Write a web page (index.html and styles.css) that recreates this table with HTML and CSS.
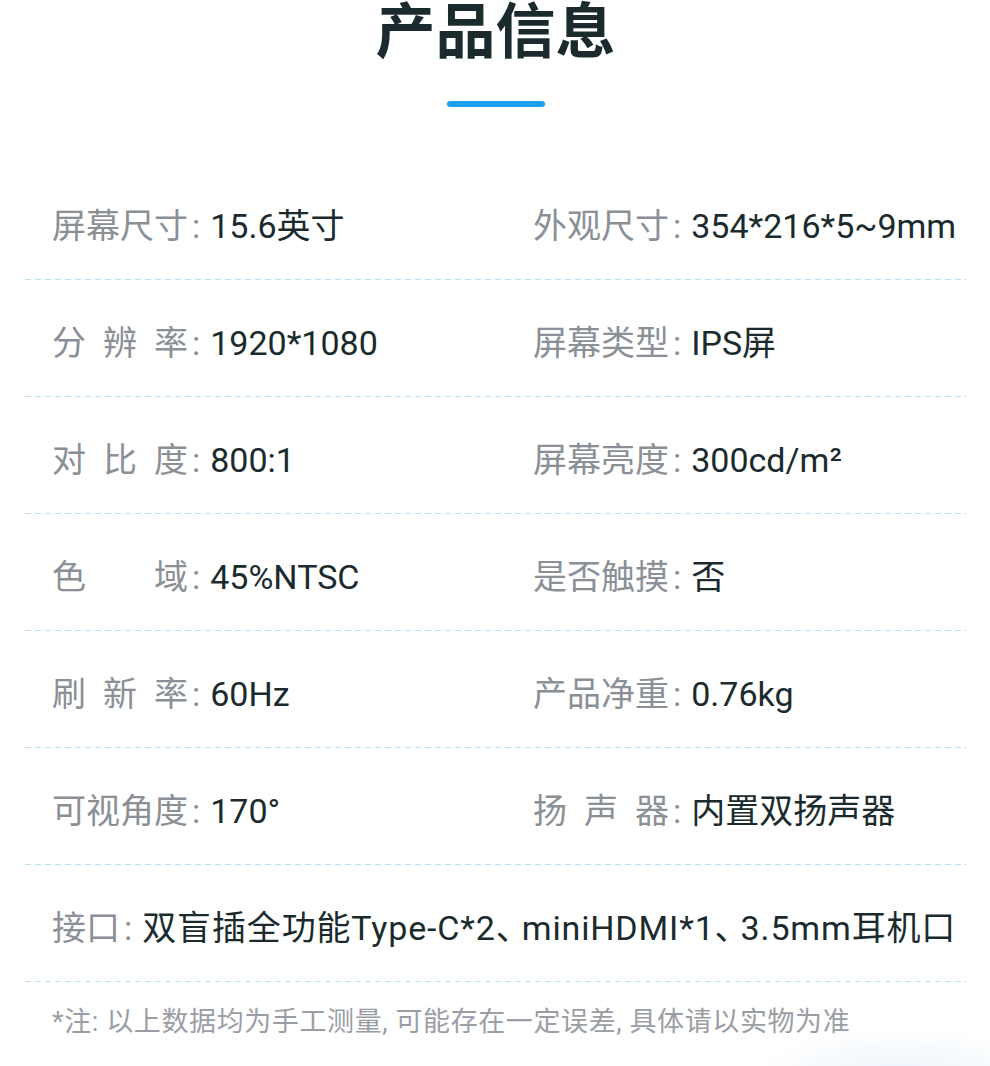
FILE: index.html
```html
<!DOCTYPE html>
<html lang="zh-CN">
<head>
  <meta charset="UTF-8" />
  <meta name="viewport" content="width=device-width, initial-scale=1.0"/>
  <title>产品信息</title>
  <link rel="stylesheet" href="styles.css">
</head>
<body>

<main class="info">
  <header class="info__header">
    <h1 class="info__title">产品信息</h1>
    <div class="info__bar"></div>
  </header>

  <section class="specs">
    <div class="specs__row">
      <div class="specs__item"><span class="specs__label">屏幕尺寸</span><span class="specs__colon">:</span><span class="specs__value">15.6英寸</span></div>
      <div class="specs__item"><span class="specs__label">外观尺寸</span><span class="specs__colon">:</span><span class="specs__value">354*216*5~9mm</span></div>
    </div>
    <div class="specs__row">
      <div class="specs__item"><span class="specs__label">分辨率</span><span class="specs__colon">:</span><span class="specs__value">1920*1080</span></div>
      <div class="specs__item"><span class="specs__label">屏幕类型</span><span class="specs__colon">:</span><span class="specs__value">IPS屏</span></div>
    </div>
    <div class="specs__row">
      <div class="specs__item"><span class="specs__label">对比度</span><span class="specs__colon">:</span><span class="specs__value">800:1</span></div>
      <div class="specs__item"><span class="specs__label">屏幕亮度</span><span class="specs__colon">:</span><span class="specs__value">300cd/m²</span></div>
    </div>
    <div class="specs__row">
      <div class="specs__item"><span class="specs__label">色域</span><span class="specs__colon">:</span><span class="specs__value">45%NTSC</span></div>
      <div class="specs__item"><span class="specs__label">是否触摸</span><span class="specs__colon">:</span><span class="specs__value">否</span></div>
    </div>
    <div class="specs__row">
      <div class="specs__item"><span class="specs__label">刷新率</span><span class="specs__colon">:</span><span class="specs__value">60Hz</span></div>
      <div class="specs__item"><span class="specs__label">产品净重</span><span class="specs__colon">:</span><span class="specs__value">0.76kg</span></div>
    </div>
    <div class="specs__row">
      <div class="specs__item"><span class="specs__label">可视角度</span><span class="specs__colon">:</span><span class="specs__value">170°</span></div>
      <div class="specs__item"><span class="specs__label">扬声器</span><span class="specs__colon">:</span><span class="specs__value">内置双扬声器</span></div>
    </div>
    <div class="specs__row specs__row--wide">
      <div class="specs__item"><span class="specs__label specs__label--auto">接口</span><span class="specs__colon">:</span><span class="specs__value specs__value--spaced">双盲插全功能Type-C*2<span class="specs__comma">、</span>miniHDMI*1<span class="specs__comma">、</span>3.5mm耳机口</span></div>
    </div>
  </section>

  <p class="info__note">*注: 以上数据均为手工测量, 可能存在一定误差, 具体请以实物为准</p>
</main>

</body>
</html>
```

FILE: styles.css
```css
* {
  box-sizing: border-box;
}
body {
  font-family: Roboto, 'Noto Sans CJK SC', sans-serif;
  background: #ffffff;
  margin: 0;
}

.info {
  position: relative;
  height: 1066px;
  padding: 0 24px 0 25px;
  overflow: hidden;
}
.info::after {
  content: '';
  position: absolute;
  right: -60px;
  bottom: -70px;
  width: 300px;
  height: 110px;
  background: radial-gradient(ellipse at center, rgba(225, 238, 248, 0.7), rgba(255, 255, 255, 0) 70%);
}

.info__header {
  display: flex;
  flex-direction: column;
  align-items: center;
}
.info__title {
  margin: 0;
  font-family: 'Noto Sans CJK SC', sans-serif;
  font-size: 60px;
  line-height: 54px;
  font-weight: 700;
  color: #1b2b2d;
}
.info__bar {
  width: 98px;
  height: 6px;
  margin-top: 47px;
  border-radius: 3px;
  background: #1fa0f2;
}

.specs {
  margin-top: 56px;
}
.specs__row {
  display: grid;
  grid-template-columns: 481px 1fr;
  height: 117px;
  padding: 43px 0 0 27px;
  background-image: repeating-linear-gradient(to right, #bde0f6 0 6px, transparent 6px 10px);
  background-size: 100% 1px;
  background-position: left bottom;
  background-repeat: no-repeat;
}
.specs__row--wide {
  grid-template-columns: 1fr;
}
.specs__item {
  display: flex;
  align-items: center;
  height: 40px;
  font-size: 34px;
  line-height: 40px;
  white-space: nowrap;
}
.specs__label {
  width: 136px;
  color: #8b8f96;
  text-align: justify;
  text-align-last: justify;
}
.specs__label--auto {
  width: auto;
}
.specs__colon {
  color: #8b8f96;
  margin: 0 10px 0 4px;
}
.specs__value {
  color: #1b2b2d;
}
.specs__value--spaced {
  letter-spacing: 0.85px;
}
.specs__comma {
  display: inline-block;
  width: 26px;
  letter-spacing: -14px;
}

.info__note {
  margin: 25px 0 0 27px;
  font-size: 27px;
  line-height: 30px;
  letter-spacing: 0.6px;
  color: #9a9ea4;
  white-space: nowrap;
}
```
